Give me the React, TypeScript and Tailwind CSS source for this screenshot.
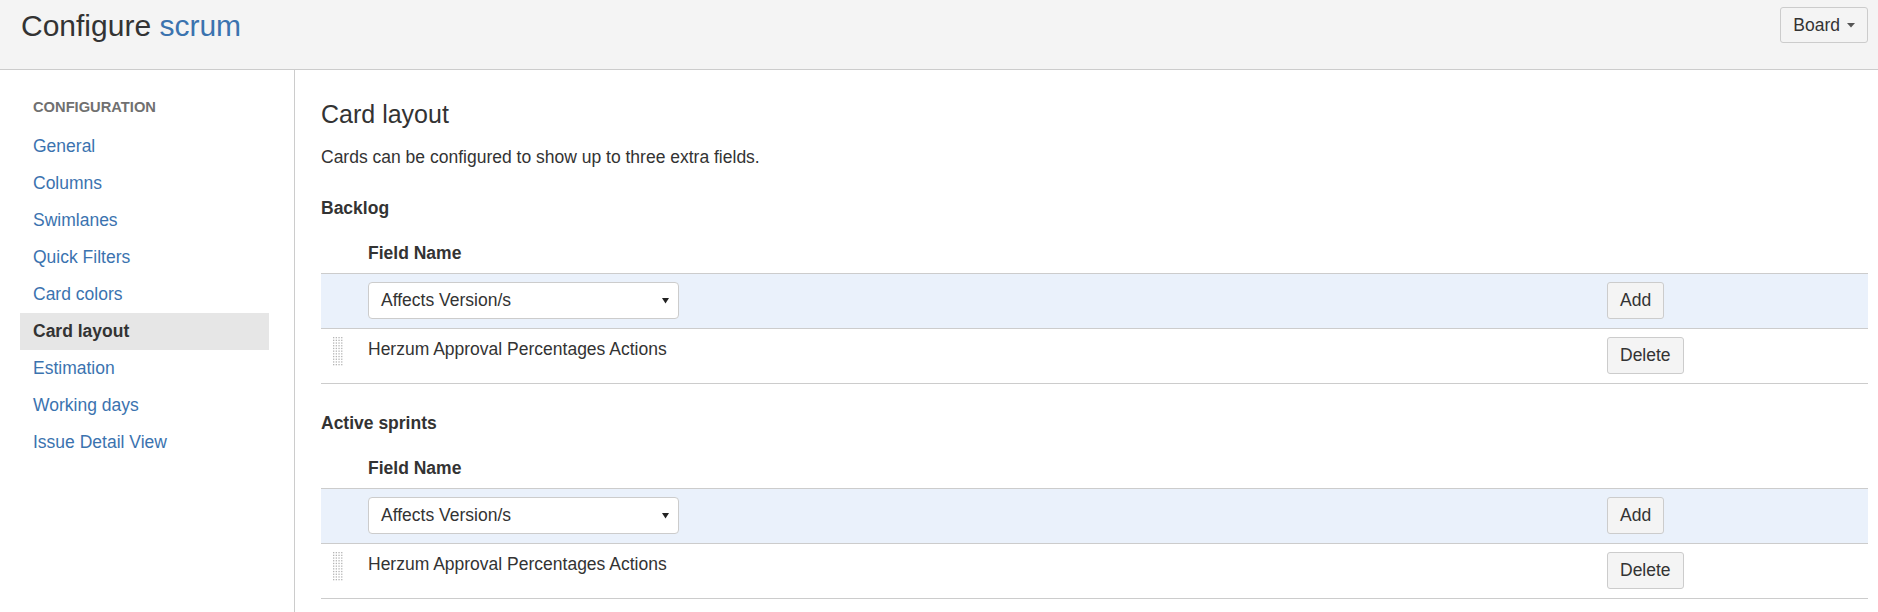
const navItems = [
  "General",
  "Columns",
  "Swimlanes",
  "Quick Filters",
  "Card colors",
  "Card layout",
  "Estimation",
  "Working days",
  "Issue Detail View",
]

function DragHandle() {
  const dots = []
  for (let r = 0; r < 11; r++) {
    for (let c = 0; c < 4; c++) {
      dots.push(<rect key={`${r}-${c}`} x={c * 2.7} y={r * 2.7} width="1.3" height="1.3" fill="#b5b5b5" />)
    }
  }
  return (
    <svg width="10" height="30" viewBox="0 0 10 30">
      {dots}
    </svg>
  )
}

function FieldSection({ title }: { title: string }) {
  return (
    <section>
      <h4 className="mb-3 text-[17.5px] font-bold leading-6">{title}</h4>
      <div className="w-full">
        <div className="flex pb-2 pt-[9px]">
          <div className="w-[47px] shrink-0" />
          <div className="flex-1 font-bold leading-6">Field Name</div>
        </div>
        <div className="flex border-y border-[#cccccc] bg-[#eaf1fb] pb-[9px] pt-2">
          <div className="w-[47px] shrink-0" />
          <div className="flex-1">
            <div className="flex h-[37px] w-[311px] items-center rounded border border-[#cccccc] bg-white pl-3 pr-[9px]">
              <span>Affects Version/s</span>
              <svg className="ml-auto" width="7" height="7" viewBox="0 0 7 7">
                <path d="M0 1h7L3.5 6.5z" fill="#222" />
              </svg>
            </div>
          </div>
          <div className="w-[261px] shrink-0">
            <button className="h-[37px] rounded-[3px] border border-[#cccccc] bg-[#f4f4f4] px-3 text-[#333]">Add</button>
          </div>
        </div>
        <div className="flex border-b border-[#cccccc] pb-[9px] pt-2">
          <div className="w-[47px] shrink-0 pl-3">
            <DragHandle />
          </div>
          <div className="flex-1 leading-6">Herzum Approval Percentages Actions</div>
          <div className="w-[261px] shrink-0">
            <button className="h-[37px] rounded-[3px] border border-[#cccccc] bg-[#f4f4f4] px-3 text-[#333]">Delete</button>
          </div>
        </div>
      </div>
    </section>
  )
}

export default function App() {
  return (
    <div className="flex min-h-screen flex-col bg-white font-['Liberation_Sans',Arial,sans-serif] text-[17.5px] text-[#333]">
      <header className="flex h-[70px] shrink-0 items-start justify-between border-b border-[#cccccc] bg-[#f4f4f4] pl-[21px] pr-[10px]">
        <h1 className="pt-2 text-[30px] font-normal leading-9">
          Configure <span className="text-[#3b73af]">scrum</span>
        </h1>
        <button className="mt-[7px] flex h-[36px] items-center gap-[7px] rounded-[3px] border border-[#cccccc] bg-[#f4f4f4] px-3 text-[#333]">
          Board
          <svg width="8" height="5" viewBox="0 0 8 5">
            <path d="M0 0h8L4 4.5z" fill="#555" />
          </svg>
        </button>
      </header>

      <div className="flex flex-1">
        <aside className="w-[295px] shrink-0 border-r border-[#cccccc] pl-5 pr-[25px] pt-[27px]">
          <div className="mb-[11px] pl-[13px] text-[14.7px] font-bold leading-5 text-[#707070]">CONFIGURATION</div>
          <nav className="flex flex-col">
            {navItems.map((item) =>
              item === "Card layout" ? (
                <div key={item} className="flex h-[37px] items-center bg-[#e6e6e6] pl-[13px] font-bold text-[#333]">
                  {item}
                </div>
              ) : (
                <a key={item} href="#" className="flex h-[37px] items-center pl-[13px] text-[#3b73af]">
                  {item}
                </a>
              ),
            )}
          </nav>
        </aside>

        <main className="flex-1 pl-[26px] pr-[10px] pt-[29px]">
          <h3 className="mb-4 text-[25px] font-normal leading-[30px]">Card layout</h3>
          <p className="mb-[27px] leading-6">Cards can be configured to show up to three extra fields.</p>
          <FieldSection title="Backlog" />
          <div className="mt-[27px]">
            <FieldSection title="Active sprints" />
          </div>
        </main>
      </div>
    </div>
  )
}
